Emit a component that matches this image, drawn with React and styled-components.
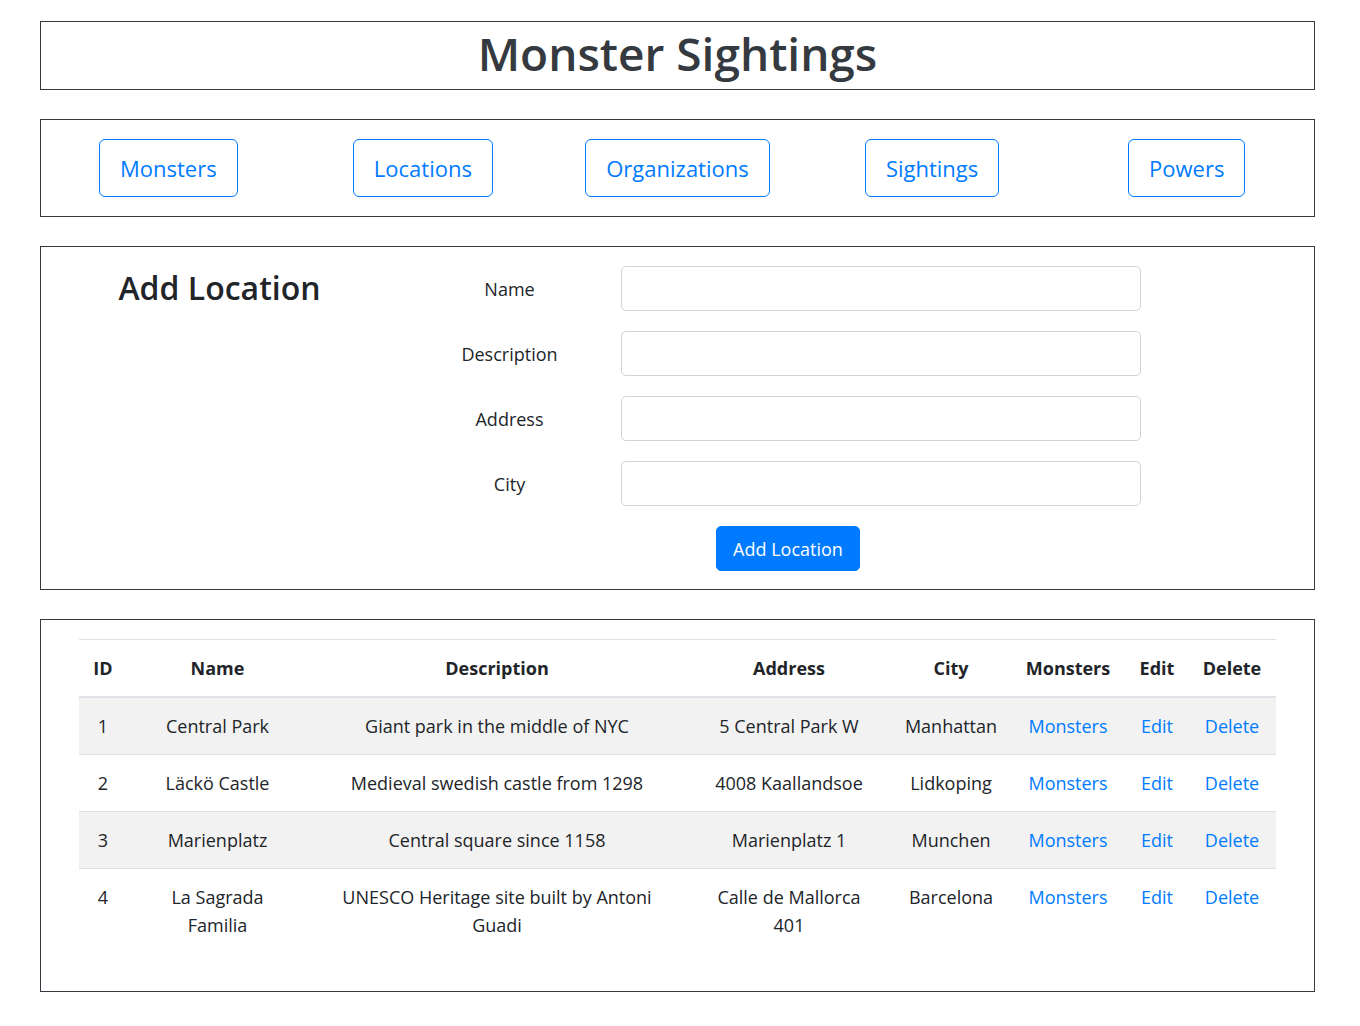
import React from 'react';
import styled, { createGlobalStyle } from 'styled-components';

const GlobalStyle = createGlobalStyle`
    body {
        margin: 0;
        background: #fff;
        font-family: "Open Sans", "Noto Sans", sans-serif;
        color: #212529;
    }
    * { box-sizing: border-box; }
`

const Page = styled.div`
    display: flex;
    flex-direction: column;
    gap: 29px;
    padding: 21px 45px 30px 40px;
`
const Box = styled.div`
    border: 1px solid #343a40;
`
const HeaderBox = styled(Box)`
    text-align: center;
    padding: 3px 0 7px;
`
const Title = styled.h1`
    margin: 0;
    font-size: 46px;
    font-weight: 600;
    line-height: 57px;
    color: #343a40;
`
const NavBox = styled(Box)`
    display: grid;
    grid-template-columns: repeat(5, 1fr);
    padding: 19px 0;
`
const NavCell = styled.div`
    display: flex;
    justify-content: center;
`
const NavButton = styled.button`
    height: 58px;
    padding: 0 20px;
    border: 1px solid #007bff;
    border-radius: 6px;
    background: #fff;
    color: #007bff;
    font-family: inherit;
    font-size: 22px;
    cursor: pointer;
`
const FormBox = styled(Box)`
    display: grid;
    grid-template-columns: 357px 780px;
    padding: 19px 0 18px;
`
const FormTitle = styled.h3`
    margin: 0;
    text-align: center;
    font-size: 32px;
    font-weight: 600;
    line-height: 44px;
`
const Fields = styled.div`
    display: grid;
    grid-template-columns: 223px 557px;
    row-gap: 20px;
    align-items: center;
`
const Label = styled.label`
    text-align: center;
    font-size: 18px;
`
const Input = styled.input`
    width: 520px;
    height: 45px;
    padding: 0 14px;
    border: 1px solid #ced4da;
    border-radius: 5px;
    font-family: inherit;
    font-size: 18px;
`
const SubmitRow = styled.div`
    grid-column: 1 / 3;
    display: flex;
    justify-content: center;
`
const PrimaryButton = styled.button`
    height: 45px;
    padding: 0 16px;
    border: 1px solid #007bff;
    border-radius: 5px;
    background: #007bff;
    color: #fff;
    font-family: inherit;
    font-size: 18px;
    cursor: pointer;
`
const TableBox = styled(Box)`
    padding: 19px 38px 38px;
`
const Table = styled.table`
    width: 100%;
    border-collapse: collapse;
    table-layout: fixed;
    font-size: 18px;
    line-height: 28px;
`
const Th = styled.th`
    padding: 14px 6px 14px;
    border-top: 1px solid #dee2e6;
    border-bottom: 2px solid #dee2e6;
    text-align: center;
    font-weight: 700;
`
const Row = styled.tr`
    background: ${p => p.$striped ? '#f2f2f2' : 'transparent'};
`
const Td = styled.td`
    padding: 14px ${p => p.$wrap ? '18px' : '4px'};
    border-top: 1px solid #dee2e6;
    text-align: center;
    vertical-align: top;
`
const Link = styled.a`
    color: #007bff;
    text-decoration: none;
    cursor: pointer;
`

const sections = ['Monsters', 'Locations', 'Organizations', 'Sightings', 'Powers']
const fields = ['Name', 'Description', 'Address', 'City']
const columns = [
    ['ID', 48], ['Name', 181], ['Description', 378], ['Address', 206],
    ['City', 118], ['Monsters', 116], ['Edit', 62], ['Delete', 88],
]
const locations = [
    { id: 1, name: 'Central Park', description: 'Giant park in the middle of NYC', address: '5 Central Park W', city: 'Manhattan' },
    { id: 2, name: 'Läckö Castle', description: 'Medieval swedish castle from 1298', address: '4008 Kaallandsoe', city: 'Lidkoping' },
    { id: 3, name: 'Marienplatz', description: 'Central square since 1158', address: 'Marienplatz 1', city: 'Munchen' },
    { id: 4, name: 'La Sagrada Familia', description: 'UNESCO Heritage site built by Antoni Guadi', address: 'Calle de Mallorca 401', city: 'Barcelona' },
]

const App = () => {
    return (
        <Page>
            <GlobalStyle />
            <HeaderBox>
                <Title>Monster Sightings</Title>
            </HeaderBox>

            <NavBox>
                {sections.map(s => (
                    <NavCell key={s}>
                        <NavButton>{s}</NavButton>
                    </NavCell>
                ))}
            </NavBox>

            <FormBox>
                <FormTitle>Add Location</FormTitle>
                <Fields>
                    {fields.map(f => (
                        <React.Fragment key={f}>
                            <Label htmlFor={f}>{f}</Label>
                            <Input id={f} type="text" />
                        </React.Fragment>
                    ))}
                    <SubmitRow>
                        <PrimaryButton>Add Location</PrimaryButton>
                    </SubmitRow>
                </Fields>
            </FormBox>

            <TableBox>
                <Table>
                    <colgroup>
                        {columns.map(([c, w]) => <col key={c} style={{ width: w }} />)}
                    </colgroup>
                    <thead>
                        <tr>
                            {columns.map(([c]) => <Th key={c}>{c}</Th>)}
                        </tr>
                    </thead>
                    <tbody>
                        {locations.map((l, i) => (
                            <Row key={l.id} $striped={i % 2 === 0}>
                                <Td>{l.id}</Td>
                                <Td $wrap>{l.name}</Td>
                                <Td $wrap>{l.description}</Td>
                                <Td $wrap>{l.address}</Td>
                                <Td>{l.city}</Td>
                                <Td><Link>Monsters</Link></Td>
                                <Td><Link>Edit</Link></Td>
                                <Td><Link>Delete</Link></Td>
                            </Row>
                        ))}
                    </tbody>
                </Table>
            </TableBox>
        </Page>
    )
}

export default App;
